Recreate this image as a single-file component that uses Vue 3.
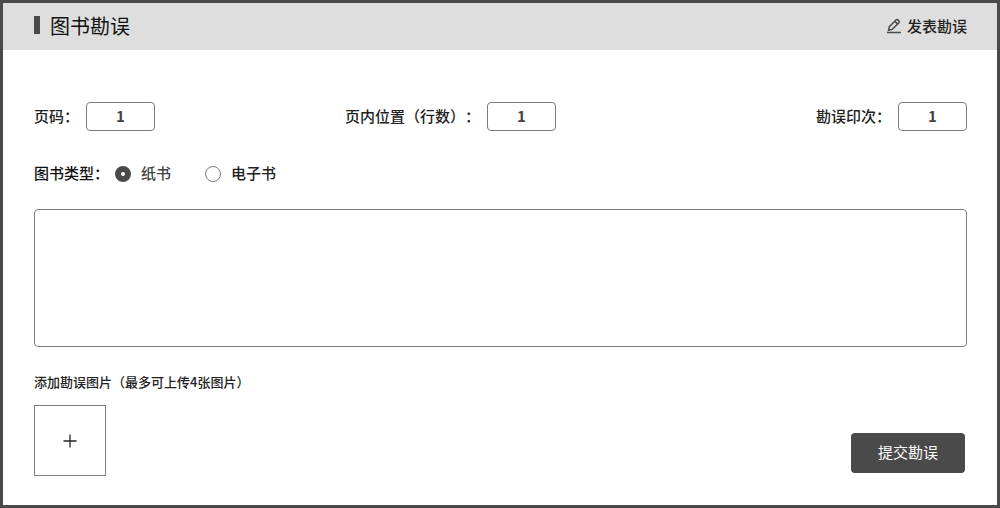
<script setup>
import { ref } from 'vue'

const page = ref('1')
const line = ref('1')
const printing = ref('1')
const kind = ref('paper')
const detail = ref('')
</script>

<template>
  <main class="panel">
    <header class="bar">
      <h1 class="title">图书勘误</h1>
      <a class="publish" href="#">
        <svg class="pen" viewBox="0 0 16 16" aria-hidden="true">
          <path d="M2.6 12.2 3.4 8.6 10.2 1.8Q11 1.2 11.8 1.9L13 3.1Q13.7 3.9 13 4.7L6.2 11.4ZM8.9 3.4 11.6 6.1M1 14.5H15" />
        </svg>
        <span class="text">发表勘误</span>
      </a>
    </header>

    <form class="form" @submit.prevent>
      <div class="fields">
        <label class="field"><span class="text">页码：</span><input v-model="page" class="num" type="text" /></label>
        <label class="field"><span class="text">页内位置（行数）：</span><input v-model="line" class="num" type="text" /></label>
        <label class="field last"><span class="text">勘误印次：</span><input v-model="printing" class="num" type="text" /></label>
      </div>

      <div class="kinds" role="radiogroup" aria-labelledby="kind-label">
        <span id="kind-label" class="kind-label text">图书类型：</span>
        <label class="kind paper"><input v-model="kind" class="radio" type="radio" value="paper" /><span class="text">纸书</span></label>
        <label class="kind"><input v-model="kind" class="radio" type="radio" value="ebook" /><span class="text">电子书</span></label>
      </div>

      <textarea v-model="detail" class="detail" aria-label="勘误内容"></textarea>

      <p class="caption">添加勘误图片（最多可上传4张图片）</p>
      <div class="bottom">
        <button class="add" type="button" aria-label="添加勘误图片">
          <svg class="plus" viewBox="0 0 14 14" aria-hidden="true"><path d="M7 0.5V13.5M0.5 7H13.5" /></svg>
        </button>
        <button class="submit" type="submit">提交勘误</button>
      </div>
    </form>
  </main>
</template>

<style>
body {
  background: #fff;
}
</style>

<style scoped>
.panel {
  box-sizing: border-box;
  min-height: 100vh;
  border: 3px solid #4a4a4a;
  background: #fff;
  color: #222;
  font: 500 15px/22px "Noto Sans CJK SC", sans-serif;
  text-spacing-trim: space-all;
}
.text {
  padding-bottom: 2px;
}
.bar {
  display: flex;
  align-items: center;
  justify-content: space-between;
  height: 47px;
  padding: 0 30px 0 31px;
  background: #dedede;
}
.title {
  display: flex;
  align-items: center;
  gap: 10px;
  margin: 0;
  padding-bottom: 2px;
  color: #111;
  font-size: 20px;
  font-weight: 400;
  line-height: 28px;
}
.title::before {
  content: "";
  width: 6px;
  height: 18px;
  margin-bottom: 2px;
  background: #4a4a4a;
}
.publish {
  display: flex;
  align-items: center;
  gap: 5px;
  color: #222;
  text-decoration: none;
}
.pen {
  width: 16px;
  height: 16px;
  margin-bottom: 2px;
  fill: none;
  stroke: #4a4a4a;
  stroke-width: 1.5;
}
.form {
  padding: 52px 30px 29px 31px;
}
.fields {
  display: grid;
  grid-template-columns: repeat(3, 1fr);
}
.field {
  display: flex;
  align-items: center;
  gap: 7px;
  white-space: nowrap;
}
.last {
  justify-content: flex-end;
}
.num {
  box-sizing: border-box;
  width: 69px;
  height: 29px;
  padding: 0 0 2px;
  border: 1px solid #7c7c7c;
  border-radius: 4px;
  background: #fff;
  color: #444;
  font: 700 15px/22px "Noto Sans CJK SC", sans-serif;
  text-align: center;
}
.kinds {
  display: flex;
  align-items: center;
  margin-top: 31px;
}
.kind-label {
  margin-right: 6px;
  color: #111;
}
.kind {
  display: flex;
  align-items: center;
  gap: 10px;
}
.paper {
  margin-right: 34px;
  color: #444;
}
.radio {
  appearance: none;
  box-sizing: border-box;
  width: 16px;
  height: 16px;
  margin: 0;
  border: 1px solid #7c7c7c;
  border-radius: 50%;
  background: #fff;
}
.radio:checked {
  border: 6px solid #4a4a4a;
}
.detail {
  display: block;
  box-sizing: border-box;
  width: 100%;
  height: 138px;
  margin-top: 23px;
  border: 1px solid #7c7c7c;
  border-radius: 4px;
  resize: none;
}
.caption {
  margin: 25px 0 13px;
  font-size: 13px;
  line-height: 20px;
}
.bottom {
  display: flex;
  align-items: flex-end;
  justify-content: space-between;
}
.add {
  display: grid;
  place-items: center;
  width: 72px;
  height: 71px;
  padding: 0;
  border: 1px solid #7c7c7c;
  background: #fff;
}
.plus {
  width: 14px;
  height: 14px;
  fill: none;
  stroke: #222;
  stroke-width: 1.3;
}
.submit {
  width: 114px;
  height: 40px;
  margin: 0 2px 3px 0;
  padding: 0 0 2px;
  border: 0;
  border-radius: 4px;
  background: #4a4a4a;
  color: #fff;
  font: 400 15px/22px "Noto Sans CJK SC", sans-serif;
}
</style>
